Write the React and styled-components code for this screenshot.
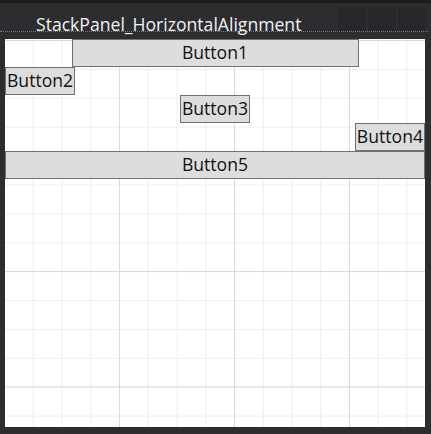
import React from 'react';
import styled, { createGlobalStyle } from 'styled-components';

const GlobalStyle = createGlobalStyle`
  html, body {
    margin: 0;
    padding: 0;
    background: #2d2d30;
  }
  body {
    width: 431px;
    height: 434px;
    overflow: hidden;
    font-family: "Open Sans", "Noto Sans", sans-serif;
  }
`;

const Window = styled.div`
  width: 431px;
  height: 434px;
  display: flex;
  flex-direction: column;
  background: #2d2d30;
  border-top: 3px solid #1c1c1e;
  box-sizing: border-box;
`;

const TitleBar = styled.div`
  height: 28px;
  display: flex;
  align-items: flex-end;
  justify-content: space-between;
  padding-left: 36px;
  border-bottom: 1px dotted #6a7a9c;
  margin-right: 3px;
`;

const Title = styled.span`
  color: #f2f2f2;
  font-size: 17.6px;
  line-height: 20px;
  margin-bottom: -3px;
`;

const Shade = styled.div`
  display: flex;
  gap: 2px;
  height: 24px;
  margin-right: 2px;
`;

const ShadeBlock = styled.div`
  width: 28px;
  background: #28282b;
`;

const Canvas = styled.div`
  margin: 7px 0 0 5px;
  width: 420px;
  height: 388px;
  background-color: #fff;
  background-image:
    linear-gradient(to right, #dadada 1px, transparent 1px),
    linear-gradient(to bottom, #dadada 1px, transparent 1px),
    linear-gradient(to right, #eeeeee 1px, transparent 1px),
    linear-gradient(to bottom, #eeeeee 1px, transparent 1px);
  background-size: 115px 115px, 115.5px 115.5px, 28.75px 28.75px, 28.9px 28.9px;
  background-position: -1px 0, 0 1px, -1px 0, 0 1px;
`;

const StackPanel = styled.div`
  display: flex;
  flex-direction: column;
`;

const alignMap = {
  left: 'flex-start',
  center: 'center',
  right: 'flex-end',
  stretch: 'stretch',
};

const Button = styled.div`
  align-self: ${(p) => alignMap[p.$align]};
  width: ${(p) => (p.$width ? `${p.$width}px` : 'auto')};
  height: 28px;
  box-sizing: border-box;
  background: #dddddd;
  border: 1px solid #707070;
  color: #111;
  font-size: 17.6px;
  line-height: 25px;
  text-align: center;
  padding: 0 1px;
`;

const buttons = [
  { label: 'Button1', align: 'center', width: 287 },
  { label: 'Button2', align: 'left' },
  { label: 'Button3', align: 'center' },
  { label: 'Button4', align: 'right' },
  { label: 'Button5', align: 'stretch' },
];

export default function App() {
  return (
    <>
      <GlobalStyle />
      <Window>
        <TitleBar>
          <Title>StackPanel_HorizontalAlignment</Title>
          <Shade>
            <ShadeBlock />
            <ShadeBlock />
            <ShadeBlock />
          </Shade>
        </TitleBar>
        <Canvas>
          <StackPanel>
            {buttons.map((b) => (
              <Button key={b.label} $align={b.align} $width={b.width}>
                {b.label}
              </Button>
            ))}
          </StackPanel>
        </Canvas>
      </Window>
    </>
  );
}
